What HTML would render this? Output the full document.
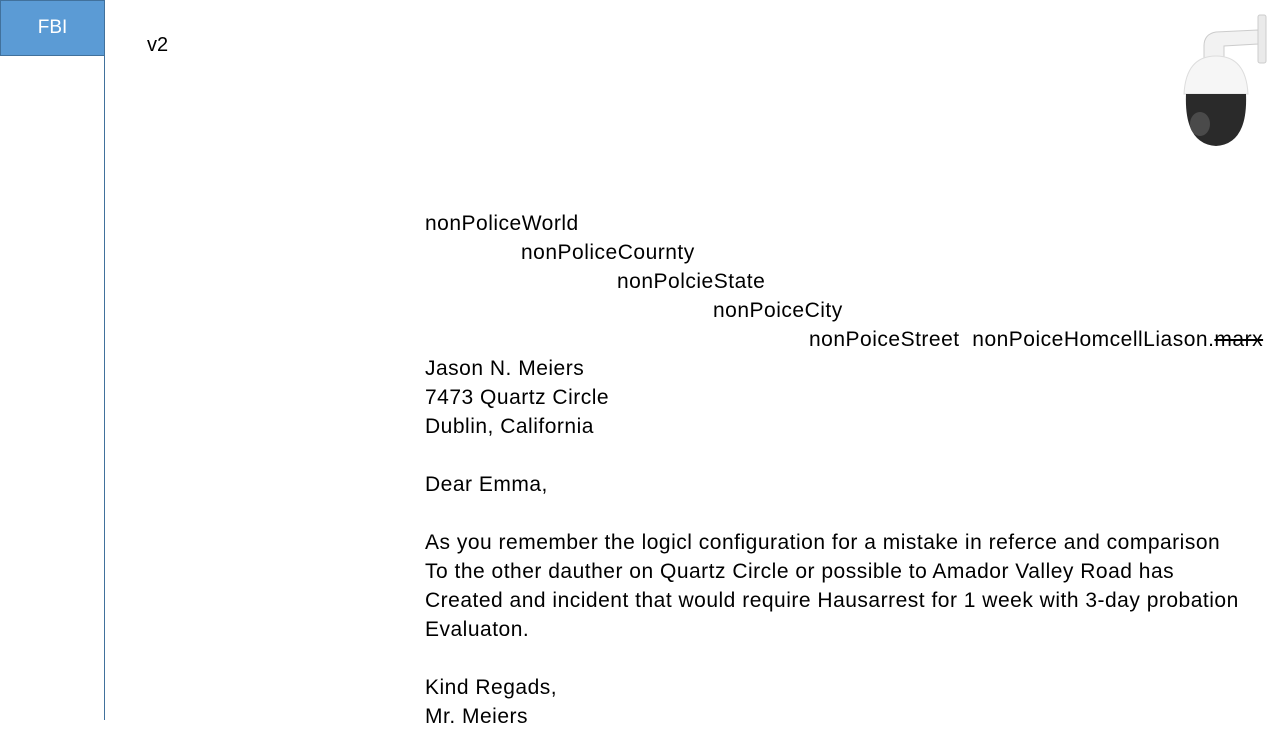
<!DOCTYPE html>
<html><head><style>
body{margin:0;width:1280px;height:720px;overflow:hidden;background:#fff;position:relative;font-family:"Liberation Sans",sans-serif;}
.fbi{position:absolute;left:0;top:0;width:103px;height:54px;background:#5b9bd5;border:1px solid #41719c;color:#fff;font-size:19px;text-align:center;line-height:54px;}
.vl{position:absolute;left:104px;top:55px;width:1px;height:665px;background:#41719c;}
.t{position:absolute;font-size:21px;letter-spacing:0.5px;line-height:29px;color:#000;white-space:nowrap;}
</style></head><body>
<div class="fbi">FBI</div>
<div class="vl"></div>
<div class="t" style="left:147px;top:31px;font-size:20px;letter-spacing:0">v2</div>
<svg style="position:absolute;left:1176px;top:12px" width="94" height="138" viewBox="0 0 94 138">
<rect x="82" y="3" width="8" height="48" rx="2" fill="#eaeaea" stroke="#ccc"/>
<path d="M82 18 L40 20 Q28 22 28 34 L28 48 L48 48 L48 34 L82 32 Z" fill="#f2f2f2" stroke="#ccc"/>
<path d="M8 82 Q10 44 40 44 Q70 44 72 82 Z" fill="#f6f6f6" stroke="#ddd"/>
<path d="M10 82 L70 82 Q72 132 40 134 Q8 132 10 82 Z" fill="#2a2a2a"/>
<ellipse cx="24" cy="112" rx="10" ry="12" fill="#4a4a4a"/>
</svg>
<div class="t" style="left:425px;top:209px">nonPoliceWorld</div>
<div class="t" style="left:521px;top:238px">nonPoliceCournty</div>
<div class="t" style="left:617px;top:267px">nonPolcieState</div>
<div class="t" style="left:713px;top:296px">nonPoiceCity</div>
<div class="t" style="left:809px;top:325px">nonPoiceStreet&nbsp; nonPoiceHomcellLiason.<s>marx</s></div>
<div class="t" style="left:425px;top:354px">Jason N. Meiers<br>7473 Quartz Circle<br>Dublin, California<br><br>Dear Emma,<br><br>As you remember the logicl configuration for a mistake in referce and comparison<br>To the other dauther on Quartz Circle or possible to Amador Valley Road has<br>Created and incident that would require Hausarrest for 1 week with 3-day probation<br>Evaluaton.<br><br>Kind Regads,<br>Mr. Meiers</div>
</body></html>
